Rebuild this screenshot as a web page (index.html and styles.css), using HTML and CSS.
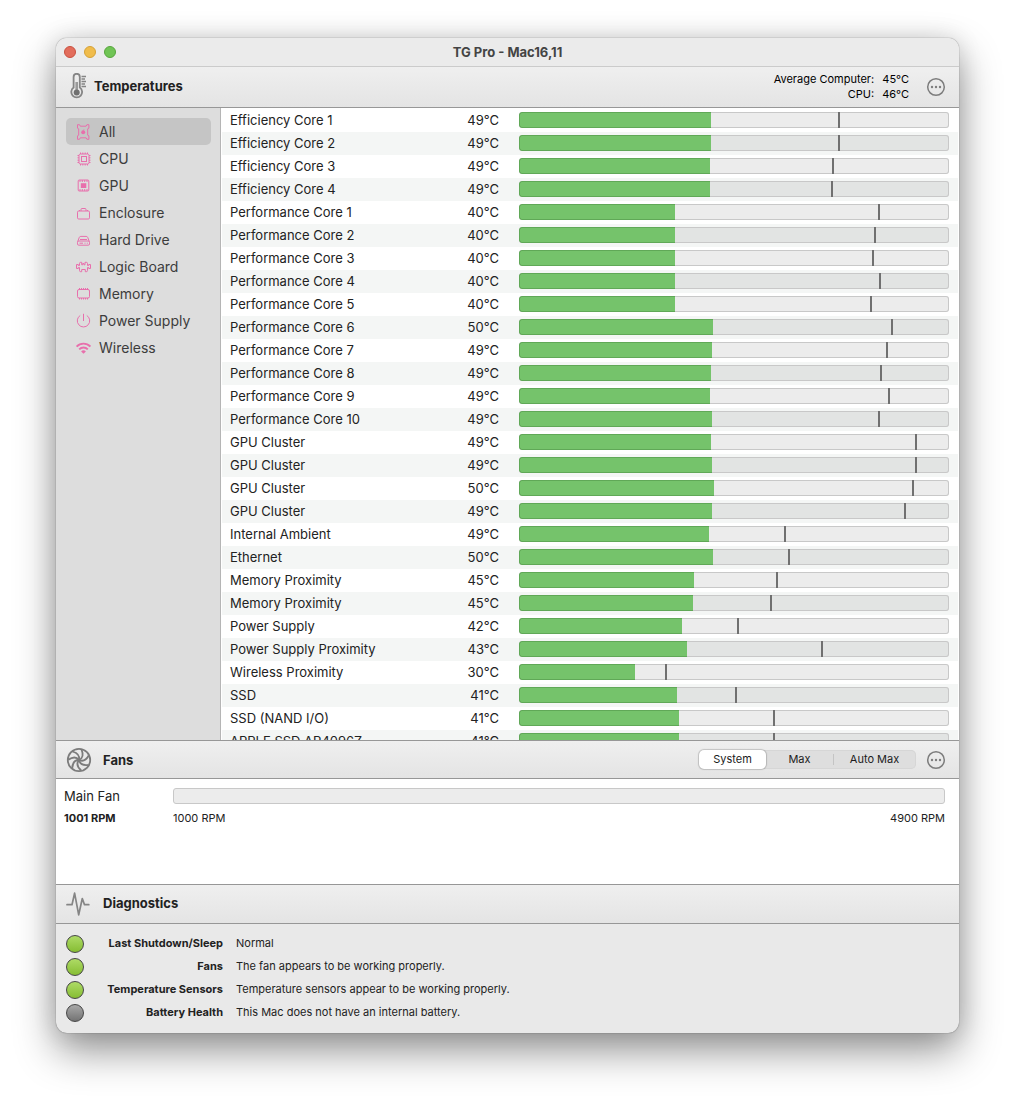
FILE: index.html
```html
<!DOCTYPE html>
<html lang="en">
<head>
<meta charset="utf-8">
<meta name="viewport" content="width=device-width, initial-scale=1">
<title>TG Pro - Mac16,11</title>
<link rel="stylesheet" href="styles.css">
</head>
<body>
<main class="window">
  <header class="titlebar">
    <div class="lights">
      <button class="light light-close" aria-label="Close"></button>
      <button class="light light-minimize" aria-label="Minimize"></button>
      <button class="light light-zoom" aria-label="Zoom"></button>
    </div>
    <h1 class="title">TG Pro - Mac16,11</h1>
  </header>

  <section class="temperatures">
    <header class="bar bar-tall">
      <svg class="bar-icon bar-icon-narrow" viewBox="0 0 20 28" fill="none" stroke="#858585">
        <path d="M5.600 14.600V3.900a3.100 3.100 0 0 1 6.200 0v10.700a5.400 5.400 0 1 1-6.200 0z" stroke-width="1.800"/>
        <path d="M8.700 9v9" stroke-width="2.600" stroke="#9a9a9a"/>
        <circle cx="8.700" cy="19.500" r="3" fill="#707070" stroke="none"/>
        <path d="M13.500 3.500H18M13.500 6H17M13.500 8.500H18M13.500 11H17M13.500 13.500H18" stroke-width="1.300"/>
      </svg>
      <h2 class="bar-title">Temperatures</h2>
      <dl class="readings">
        <dt>Average Computer:</dt><dd>45°C</dd>
        <dt>CPU:</dt><dd>46°C</dd>
      </dl>
      <button class="more" aria-label="Temperature options">
        <svg viewBox="0 0 20 20"><circle cx="10" cy="10" r="8.300" fill="none" stroke="#7d7d7d" stroke-width="1.500"/><g fill="#7d7d7d"><circle cx="6" cy="10" r="1.200"/><circle cx="10" cy="10" r="1.200"/><circle cx="14" cy="10" r="1.200"/></g></svg>
      </button>
    </header>

    <div class="split">
      <nav class="sidebar">
        <button class="item item-selected">
          <svg viewBox="0 0 16 16"><path d="M2.500.7h2l.8 1.500h5.800l.8-1.500h2v3.500l-1.200.6v6.400l1.200.6v3.500h-2l-.8-1.500H5.300l-.8 1.500h-2v-3.500l1.200-.6V4.800l-1.200-.6z"/><circle class="solid" cx="8.200" cy="8.200" r="2"/><path d="M8.300 6.500l.6-1"/></svg>
          All
        </button>
        <button class="item">
          <svg viewBox="0 0 16 16"><rect x="4" y="3" width="10" height="10" rx="1.500"/><rect x="6.500" y="5.500" width="5" height="5"/><path d="M5.500 3V1.500M7.800 3V1.500M10.200 3V1.500M12.500 3V1.500M5.500 13v1.500M7.800 13v1.500M10.200 13v1.500M12.500 13v1.500M4 4.500H2.500M4 6.800H2.500M4 9.200H2.500M4 11.500H2.500M14 4.500h1.500M14 6.800h1.500M14 9.200h1.500M14 11.500h1.500"/></svg>
          CPU
        </button>
        <button class="item">
          <svg viewBox="0 0 16 16"><rect x="3.200" y="2" width="10.600" height="11" rx="1"/><rect class="solid" x="5.800" y="5.200" width="5.500" height="4.800"/><path d="M5 2v2M7.300 2v2M9.700 2v2M12 2v2M5 11v2M7.300 11v2M9.700 11v2M12 11v2"/></svg>
          GPU
        </button>
        <button class="item">
          <svg viewBox="0 0 16 16"><rect x="2.500" y="6" width="12" height="8" rx="1.200"/><path d="M6 6V4.500q0-1 1-1h3q1 0 1 1V6M4.500 6V5M12.500 6V5"/></svg>
          Enclosure
        </button>
        <button class="item">
          <svg viewBox="0 0 16 16"><path d="M2.700 9.600l1.500-4q.4-1.200 1.600-1.200h5.400q1.200 0 1.600 1.200l1.500 4"/><rect x="2.500" y="9" width="12" height="4.200" rx="1.300"/><path d="M4.500 11.200h3.500M9.500 11.200h1M11.800 11.200h1M5 7.500h7"/></svg>
          Hard Drive
        </button>
        <button class="item">
          <svg viewBox="0 0 16 16"><path d="M4.500 6.500H3.300V5.500H1.500v4h1.800V8.500h1.200v3q0 1.200 1.200 1.200h1V10.500h3.600v2.200h1q1.200 0 1.200-1.200v-3h1.200v1h1.800v-4h-1.800v1h-1.200v-2q0-1.200-1.200-1.200H10v2.500H8.900V4.500H7.700v1.300H6.700V3.300h-1q-1.200 0-1.200 1.200z"/></svg>
          Logic Board
        </button>
        <button class="item">
          <svg viewBox="0 0 16 16"><rect x="2.500" y="3.500" width="12" height="8.500" rx="1.500"/><path d="M4.500 3.500V2M6.500 3.500V2M8.500 3.500V2M10.500 3.500V2M12.500 3.500V2M4.500 12v1.500M6.500 12v1.500M8.500 12v1.500M10.500 12v1.500M12.500 12v1.500"/></svg>
          Memory
        </button>
        <button class="item">
          <svg viewBox="0 0 16 16"><path d="M8.500.8V8M5.200 2.500a6.200 6.200 0 1 0 6.600 0"/></svg>
          Power Supply
        </button>
        <button class="item">
          <svg viewBox="0 0 16 16"><path d="M1.600 6.600a9.600 9.600 0 0 1 13.800 0M4.200 9.300a6 6 0 0 1 8.600 0" stroke-width="1.900"/><path class="solid" d="M8.500 13.800l-2.400-2.400a3.500 3.500 0 0 1 4.800 0z"/></svg>
          Wireless
        </button>
      </nav>

      <div class="sensors">
        <table class="table">
          <colgroup><col class="col-name"><col class="col-value"><col></colgroup>
          <tbody>
            <tr><td>Efficiency Core 1</td><td>49°C</td><td><div class="gauge" style="--fill:192;--peak:319"></div></td></tr>
            <tr><td>Efficiency Core 2</td><td>49°C</td><td><div class="gauge" style="--fill:192;--peak:319"></div></td></tr>
            <tr><td>Efficiency Core 3</td><td>49°C</td><td><div class="gauge" style="--fill:191;--peak:313"></div></td></tr>
            <tr><td>Efficiency Core 4</td><td>49°C</td><td><div class="gauge" style="--fill:191;--peak:312"></div></td></tr>
            <tr><td>Performance Core 1</td><td>40°C</td><td><div class="gauge" style="--fill:156;--peak:359"></div></td></tr>
            <tr><td>Performance Core 2</td><td>40°C</td><td><div class="gauge" style="--fill:156;--peak:355"></div></td></tr>
            <tr><td>Performance Core 3</td><td>40°C</td><td><div class="gauge" style="--fill:156;--peak:353"></div></td></tr>
            <tr><td>Performance Core 4</td><td>40°C</td><td><div class="gauge" style="--fill:156;--peak:360"></div></td></tr>
            <tr><td>Performance Core 5</td><td>40°C</td><td><div class="gauge" style="--fill:156;--peak:351"></div></td></tr>
            <tr><td>Performance Core 6</td><td>50°C</td><td><div class="gauge" style="--fill:194;--peak:372"></div></td></tr>
            <tr><td>Performance Core 7</td><td>49°C</td><td><div class="gauge" style="--fill:193;--peak:367"></div></td></tr>
            <tr><td>Performance Core 8</td><td>49°C</td><td><div class="gauge" style="--fill:192;--peak:361"></div></td></tr>
            <tr><td>Performance Core 9</td><td>49°C</td><td><div class="gauge" style="--fill:191;--peak:369"></div></td></tr>
            <tr><td>Performance Core 10</td><td>49°C</td><td><div class="gauge" style="--fill:193;--peak:359"></div></td></tr>
            <tr><td>GPU Cluster</td><td>49°C</td><td><div class="gauge" style="--fill:192;--peak:396"></div></td></tr>
            <tr><td>GPU Cluster</td><td>49°C</td><td><div class="gauge" style="--fill:193;--peak:396"></div></td></tr>
            <tr><td>GPU Cluster</td><td>50°C</td><td><div class="gauge" style="--fill:195;--peak:393"></div></td></tr>
            <tr><td>GPU Cluster</td><td>49°C</td><td><div class="gauge" style="--fill:193;--peak:385"></div></td></tr>
            <tr><td>Internal Ambient</td><td>49°C</td><td><div class="gauge" style="--fill:190;--peak:265"></div></td></tr>
            <tr><td>Ethernet</td><td>50°C</td><td><div class="gauge" style="--fill:194;--peak:269"></div></td></tr>
            <tr><td>Memory Proximity</td><td>45°C</td><td><div class="gauge" style="--fill:175;--peak:257"></div></td></tr>
            <tr><td>Memory Proximity</td><td>45°C</td><td><div class="gauge" style="--fill:174;--peak:251"></div></td></tr>
            <tr><td>Power Supply</td><td>42°C</td><td><div class="gauge" style="--fill:163;--peak:218"></div></td></tr>
            <tr><td>Power Supply Proximity</td><td>43°C</td><td><div class="gauge" style="--fill:168;--peak:302"></div></td></tr>
            <tr><td>Wireless Proximity</td><td>30°C</td><td><div class="gauge" style="--fill:116;--peak:146"></div></td></tr>
            <tr><td>SSD</td><td>41°C</td><td><div class="gauge" style="--fill:158;--peak:216"></div></td></tr>
            <tr><td>SSD (NAND I/O)</td><td>41°C</td><td><div class="gauge" style="--fill:160;--peak:254"></div></td></tr>
            <tr><td>APPLE SSD AP4096Z</td><td>41°C</td><td><div class="gauge" style="--fill:160;--peak:254"></div></td></tr>
          </tbody>
        </table>
      </div>
    </div>
  </section>

  <section class="fans">
    <header class="bar">
      <svg class="bar-icon" viewBox="0 0 26 26" fill="none" stroke="#7c7c7c" stroke-width="1.800">
        <circle cx="13" cy="13" r="11.200"/>
        <path id="blade" d="M13 13C14 9 11.500 6 6.500 4.500"/>
        <use href="#blade" transform="rotate(51.400 13 13)"/>
        <use href="#blade" transform="rotate(102.900 13 13)"/>
        <use href="#blade" transform="rotate(154.300 13 13)"/>
        <use href="#blade" transform="rotate(205.700 13 13)"/>
        <use href="#blade" transform="rotate(257.100 13 13)"/>
        <use href="#blade" transform="rotate(308.600 13 13)"/>
      </svg>
      <h2 class="bar-title">Fans</h2>
      <div class="segments">
        <button class="segment segment-on">System</button>
        <button class="segment">Max</button>
        <button class="segment segment-wide">Auto Max</button>
      </div>
      <button class="more" aria-label="Fan options">
        <svg viewBox="0 0 20 20"><circle cx="10" cy="10" r="8.300" fill="none" stroke="#7d7d7d" stroke-width="1.500"/><g fill="#7d7d7d"><circle cx="6" cy="10" r="1.200"/><circle cx="10" cy="10" r="1.200"/><circle cx="14" cy="10" r="1.200"/></g></svg>
      </button>
    </header>
    <div class="fan">
      <span class="fan-name">Main Fan</span>
      <div class="fan-gauge"></div>
      <strong class="fan-speed">1001 RPM</strong>
      <div class="fan-range"><span>1000 RPM</span><span>4900 RPM</span></div>
    </div>
  </section>

  <section class="diagnostics">
    <header class="bar bar-diagnostics">
      <svg class="bar-icon" viewBox="0 0 26 26" fill="none" stroke="#858585" stroke-width="1.700" stroke-linejoin="round" stroke-linecap="round">
        <path d="M1 13.700H6L8.600 2.200 12.700 23.800 16.300 7.500 18.500 13.700h4.300"/>
      </svg>
      <h2 class="bar-title">Diagnostics</h2>
    </header>
    <ul class="checks">
      <li class="check"><span class="dot"></span><strong>Last Shutdown/Sleep</strong><span>Normal</span></li>
      <li class="check"><span class="dot"></span><strong>Fans</strong><span>The fan appears to be working properly.</span></li>
      <li class="check"><span class="dot"></span><strong>Temperature Sensors</strong><span>Temperature sensors appear to be working properly.</span></li>
      <li class="check"><span class="dot dot-off"></span><strong>Battery Health</strong><span>This Mac does not have an internal battery.</span></li>
    </ul>
  </section>
</main>
</body>
</html>
```

FILE: styles.css
```css
*,
*::before,
*::after {
  box-sizing: border-box;
}

body {
  margin: 0;
  height: 100vh;
  padding: 38px 56px 74px;
  background: #fff;
  color: #222;
  font: 13px/16px Inter, "Liberation Sans", sans-serif;
}

button {
  margin: 0;
  padding: 0;
  border: 0;
  background: none;
  color: inherit;
  font: inherit;
}

h1,
h2,
dl,
dd,
ul {
  margin: 0;
  padding: 0;
}

.window {
  display: flex;
  flex-direction: column;
  height: 100%;
  border-radius: 11px;
  overflow: hidden;
  background: #e9e9e9;
  box-shadow: 0 0 1px rgba(0, 0, 0, 0.7), 0 18px 40px rgba(0, 0, 0, 0.42), 0 0 24px rgba(0, 0, 0, 0.12);
}

/* Title bar */
.titlebar {
  display: grid;
  grid-template-columns: 1fr auto 1fr;
  align-items: center;
  flex: none;
  height: 29px;
  padding: 0 8px;
  border-bottom: 1px solid #cbcbcb;
  background: #ebebeb;
}

.lights {
  display: flex;
  gap: 8px;
}

.light {
  width: 12px;
  height: 12px;
  border: 1px solid #c9503f;
  border-radius: 50%;
  background: #e26d5c;
}

.light-minimize {
  border-color: #d5a136;
  background: #f0bc4b;
}

.light-zoom {
  border-color: #57a53d;
  background: #70c455;
}

.title {
  color: #444;
  font-size: 13px;
  font-weight: 700;
}

/* Section bars */
.bar {
  display: flex;
  align-items: center;
  flex: none;
  height: 39px;
  padding: 0 14px 0 10px;
  border-top: 1px solid #979797;
  border-bottom: 1px solid #979797;
  background: linear-gradient(#efefef, #e4e4e4);
}

.bar-tall {
  height: 41px;
  border-top: 0;
}

.bar-diagnostics {
  height: 40px;
}

.bar-icon {
  flex: none;
  width: 26px;
  height: 26px;
  margin-right: 11px;
}

.bar-icon-narrow {
  width: 20px;
  height: 28px;
  margin-left: 2px;
  margin-right: 6px;
}

.bar-title {
  margin-right: auto;
  font-size: 13px;
  font-weight: 700;
}

.bar-tall .bar-title,
.bar-diagnostics .bar-title {
  padding-bottom: 2px;
}

.readings {
  display: grid;
  grid-template-columns: auto auto;
  column-gap: 8px;
  margin-right: 17px;
  color: #000;
  font-size: 11px;
  line-height: 15px;
  text-align: right;
}

.more {
  display: flex;
}

.more svg {
  width: 20px;
  height: 20px;
  margin-right: -1px;
}

/* Temperatures */
.temperatures {
  display: flex;
  flex-direction: column;
  flex: 1;
  min-height: 0;
}

.split {
  display: flex;
  flex: 1;
  min-height: 0;
}

.sidebar {
  flex: none;
  width: 165px;
  padding: 10px 9px 10px 10px;
  border-right: 1px solid #b5b5b5;
  background: #ddd;
}

.item {
  display: flex;
  align-items: center;
  gap: 8px;
  width: 100%;
  height: 27px;
  padding: 0 9px;
  border-radius: 5px;
  color: #3c3c3c;
  font-size: 14px;
}

.item-selected {
  background: #c5c5c5;
}

.item svg {
  flex: none;
  width: 16px;
  height: 16px;
  fill: none;
  stroke: #e86fac;
}

.item .solid {
  fill: #e86fac;
  stroke: none;
}

.sensors {
  flex: 1;
  min-width: 0;
  padding: 1px 1px 0;
  overflow: hidden;
  background: #fff;
}

.table {
  width: 100%;
  border-spacing: 0;
  table-layout: fixed;
}

.col-name {
  width: 218px;
}

.col-value {
  width: 79px;
}

.table tr {
  height: 23px;
}

.table tr:nth-child(even) {
  background: #f4f6f5;
}

.table td {
  padding: 0 0 2px 8px;
}

.table td:nth-child(2) {
  padding: 0 20px 2px 0;
  text-align: right;
}

.table td:nth-child(3) {
  padding: 0 9px 2px 0;
}

.gauge {
  position: relative;
  height: 16px;
  border-radius: 3px;
  overflow: hidden;
  background: #ececec;
  box-shadow: inset 0 0 0 1px #c8c8c8;
}

.table tr:nth-child(even) .gauge {
  background: #e2e4e3;
}

.gauge::before {
  content: "";
  display: block;
  width: calc(var(--fill) / 430 * 100%);
  height: 100%;
  border: 1px solid #60a857;
  border-right: 0;
  border-radius: 3px 0 0 3px;
  background: #75c36b;
}

.gauge::after {
  content: "";
  position: absolute;
  top: 0;
  left: calc(var(--peak) / 430 * 100%);
  width: 2px;
  height: 100%;
  background: #707070;
}

/* Fans */
.segments {
  display: flex;
  height: 19px;
  margin: 0 10px 1px 0;
  border-radius: 5px;
  background: #dedede;
  box-shadow: inset 0 0 0 1px #d6d6d6;
  color: #1c1c1c;
  font-size: 11px;
}

.segment {
  width: 67px;
  padding-bottom: 1px;
}

.segment-on {
  border-radius: 5px;
  background: #fff;
  box-shadow: 0 0 1px 1px rgba(0, 0, 0, 0.18);
}

.segment-wide {
  width: 83px;
  background: linear-gradient(#c4c4c4, #c4c4c4) left center / 1px 11px no-repeat;
}

.fan {
  display: grid;
  grid-template-columns: 109px 1fr;
  align-content: start;
  align-items: center;
  row-gap: 5px;
  height: 105px;
  padding: 8px 14px 0 8px;
  background: #fff;
}

.fan-name {
  line-height: 18px;
}

.fan-gauge {
  height: 16px;
  border: 1px solid #c8c8c8;
  border-radius: 3px;
  background: #ececec;
}

.fan-speed,
.fan-range {
  font-size: 11px;
}

.fan-range {
  display: flex;
  justify-content: space-between;
}

/* Diagnostics */
.checks {
  padding: 8px 10px 9px;
  list-style: none;
  font-size: 11px;
}

.check {
  display: grid;
  grid-template-columns: 18px 139px 1fr;
  align-items: center;
  height: 23px;
}

.check strong {
  padding-bottom: 2px;
  text-align: right;
}

.check strong + span {
  padding: 0 0 2px 13px;
}

.dot {
  width: 18px;
  height: 18px;
  border: 1px solid #454545;
  border-radius: 50%;
  background: linear-gradient(#aedb66, #86bd33);
}

.dot-off {
  background: linear-gradient(#a8a8a8, #737373);
}
```
